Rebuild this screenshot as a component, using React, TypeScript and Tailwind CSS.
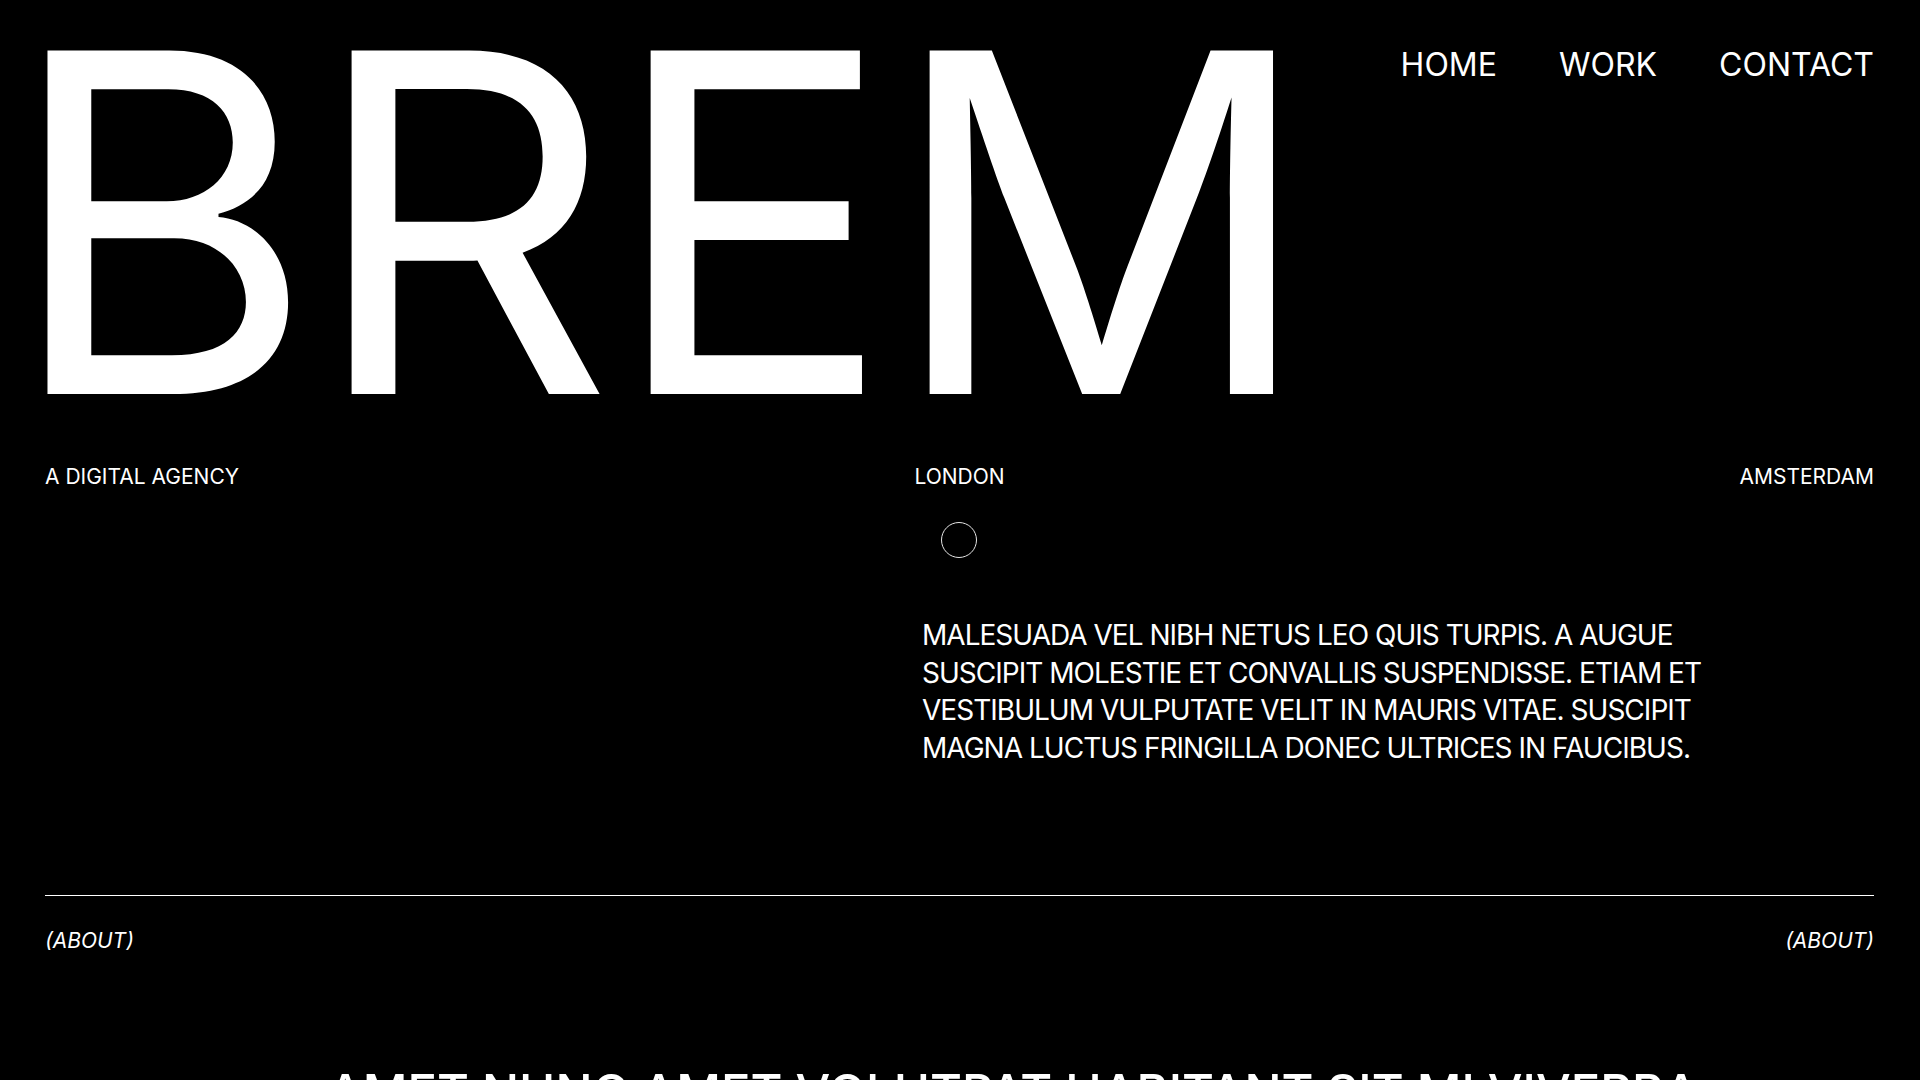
import React from "react";

export default function App() {
  return (
    <div
      className="min-h-screen bg-black text-white overflow-hidden"
      style={{ fontFamily: "Inter, 'Noto Sans', sans-serif" }}
    >
      <div className="pl-[45px] pr-[46px] pt-[46px]">
        <header className="flex items-start justify-between">
          <h1 className="text-[472px] leading-[0.75] font-normal tracking-[-0.01em] -ml-[39px]">
            BREM
          </h1>
          <nav className="flex gap-[62px] text-[32px] leading-none mt-[3px]">
            <a href="#">HOME</a>
            <a href="#">WORK</a>
            <a href="#">CONTACT</a>
          </nav>
        </header>

        <div className="grid grid-cols-3 mt-[65px] text-[21px] leading-[24px]">
          <div>A DIGITAL AGENCY</div>
          <div className="flex flex-col items-center">
            <span>LONDON</span>
            <span className="mt-[33px] block w-[36px] h-[36px] rounded-full border border-[#e5e5e5]" />
          </div>
          <div className="text-right">AMSTERDAM</div>
        </div>

        <div className="pl-[877px] mt-[59px]">
          <p className="w-[820px] text-[28px] leading-[37.5px] tracking-[-0.035em]">
            MALESUADA VEL NIBH NETUS LEO QUIS TURPIS. A AUGUE SUSCIPIT MOLESTIE ET
            CONVALLIS SUSPENDISSE. ETIAM ET VESTIBULUM VULPUTATE VELIT IN MAURIS
            VITAE. SUSCIPIT MAGNA LUCTUS FRINGILLA DONEC ULTRICES IN FAUCIBUS.
          </p>
        </div>

        <div className="mt-[128px] h-px bg-white" />

        <div className="flex justify-between mt-[32px] text-[21px] leading-[26px] italic">
          <span>(ABOUT)</span>
          <span>(ABOUT)</span>
        </div>

        <h2 className="mt-[114px] pl-[283px] whitespace-nowrap text-[49px] leading-none font-medium">
          AMET NUNC AMET VOLUTPAT HABITANT SIT MI VIVERRA
        </h2>
      </div>
    </div>
  );
}
